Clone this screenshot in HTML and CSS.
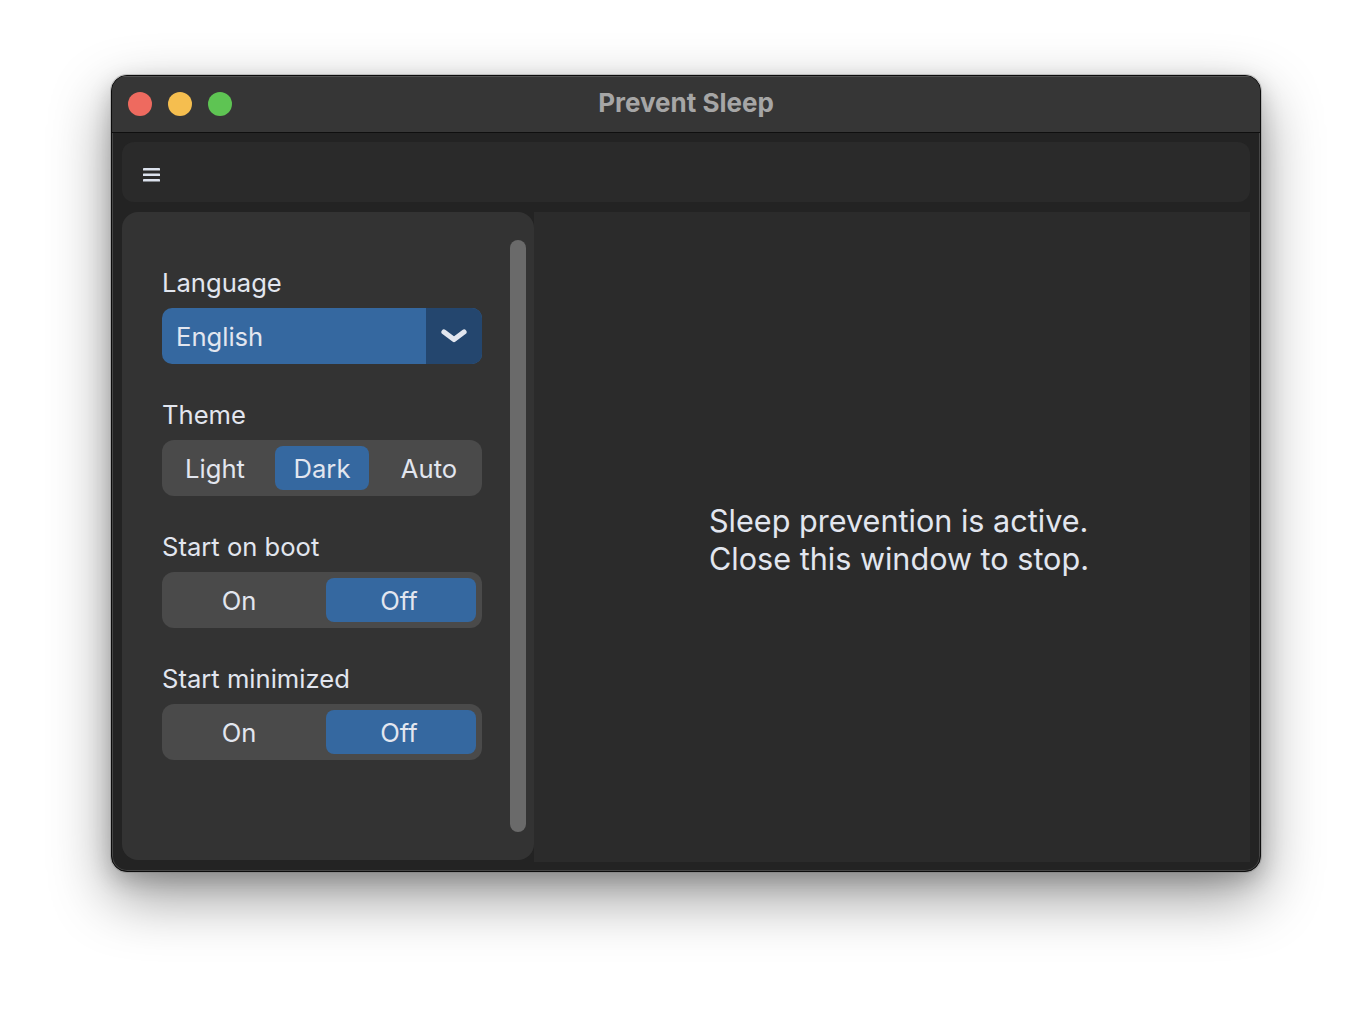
FILE: index.html
```html
<!DOCTYPE html>
<html lang="en">
<head>
<meta charset="utf-8">
<title>Prevent Sleep</title>
<link rel="stylesheet" href="styles.css">
</head>
<body>
<div class="window">
  <header class="titlebar">
    <div class="lights">
      <span class="light red"></span>
      <span class="light yellow"></span>
      <span class="light green"></span>
    </div>
    <div class="title">Prevent Sleep</div>
  </header>
  <div class="content">
    <div class="toolbar">
      <svg class="menu-icon" width="17" height="14" viewBox="0 0 17 14" aria-label="Menu">
        <rect x="0" y="0" width="17" height="2.6" rx="0.4" fill="#dbe1ec"/>
        <rect x="0" y="5.5" width="17" height="2.6" rx="0.4" fill="#dbe1ec"/>
        <rect x="0" y="11" width="17" height="2.6" rx="0.4" fill="#dbe1ec"/>
      </svg>
    </div>
    <div class="main">
      <aside class="sidebar">
        <div class="settings">
          <section class="setting">
            <div class="label">Language</div>
            <div class="select">
              <span class="select-value">English</span>
              <span class="select-arrow">
                <svg width="26" height="14" viewBox="0 0 26 14"><polyline points="3,3 13,10.5 23,3" fill="none" stroke="#e2e6ef" stroke-width="5.2" stroke-linecap="round" stroke-linejoin="round"/></svg>
              </span>
            </div>
          </section>
          <section class="setting">
            <div class="label">Theme</div>
            <div class="segmented three">
              <span class="seg">Light</span>
              <span class="seg active">Dark</span>
              <span class="seg">Auto</span>
            </div>
          </section>
          <section class="setting">
            <div class="label">Start on boot</div>
            <div class="segmented two">
              <span class="seg">On</span>
              <span class="seg active">Off</span>
            </div>
          </section>
          <section class="setting">
            <div class="label">Start minimized</div>
            <div class="segmented two">
              <span class="seg">On</span>
              <span class="seg active">Off</span>
            </div>
          </section>
        </div>
        <div class="scrollbar"><div class="thumb"></div></div>
      </aside>
      <main class="panel">
        <p class="status">Sleep prevention is active.<br>Close this window to stop.</p>
      </main>
    </div>
  </div>
</div>
</body>
</html>
```

FILE: styles.css
```css
* { box-sizing: border-box; }

html, body {
  margin: 0;
  background: #ffffff;
}

body {
  padding: 75px 0 0 111px;
  font-family: "Inter", "Noto Sans", sans-serif;
  color: #e2e6ef;
  height: 1020px;
  overflow: hidden;
}

.window {
  width: 1150px;
  height: 797px;
  border-radius: 16px;
  border: 1px solid #0c0c0c;
  background: #232323;
  overflow: hidden;
  display: flex;
  flex-direction: column;
  box-shadow: inset 0 0 0 1px rgba(255,255,255,0.16),
              0 0 0 1px rgba(120,120,120,0.35),
              0 24px 60px rgba(0,0,0,0.42),
              0 8px 22px rgba(0,0,0,0.18);
}

.titlebar {
  height: 57px;
  flex: none;
  background: #363636;
  border-bottom: 1px solid #0f0f0f;
  box-shadow: inset 0 1px 0 rgba(255,255,255,0.14);
  display: flex;
  align-items: center;
  position: relative;
}

.lights {
  display: flex;
  gap: 16px;
  padding-left: 16px;
}

.light {
  width: 24px;
  height: 24px;
  border-radius: 50%;
  display: block;
}
.red { background: #ee6a5f; }
.yellow { background: #f5be4f; }
.green { background: #5ec453; }

.title {
  position: absolute;
  left: 0;
  right: 0;
  top: 11px;
  text-align: center;
  font-weight: 700;
  font-size: 26px;
  line-height: 32px;
  color: #a6a6a6;
  pointer-events: none;
}

.content {
  flex: 1;
  display: flex;
  flex-direction: column;
  padding: 9px 10px 9px 10px;
  gap: 10px;
  min-height: 0;
}

.toolbar {
  height: 60px;
  flex: none;
  background: #2a2a2a;
  border-radius: 12px;
  padding: 26px 0 0 21px;
}

.menu-icon { display: block; }

.main {
  flex: 1;
  display: flex;
  min-height: 0;
}

.sidebar {
  width: 412px;
  flex: none;
  background: #333333;
  border-radius: 16px;
  display: flex;
  margin-bottom: 2px;
}

.settings {
  width: 360px;
  padding: 55px 0 0 40px;
  display: flex;
  flex-direction: column;
  gap: 35px;
}

.label {
  font-size: 25.6px;
  line-height: 32px;
  margin-bottom: 9px;
  color: #e2e6ef;
}

.select {
  width: 320px;
  height: 56px;
  border-radius: 10px;
  background: #3568a0;
  display: flex;
  overflow: hidden;
}

.select-value {
  flex: 1;
  font-size: 25.6px;
  line-height: 58px;
  padding-left: 14px;
}

.select-arrow {
  width: 56px;
  background: #24466e;
  display: flex;
  align-items: center;
  justify-content: center;
}

.select-arrow svg { display: block; margin-top: 0; }

.segmented {
  width: 320px;
  height: 56px;
  background: #4a4a4a;
  border-radius: 12px;
  padding: 6px;
  display: grid;
}

.segmented.three {
  grid-template-columns: 94px 94px 94px;
  column-gap: 13px;
}

.segmented.two {
  grid-template-columns: 142px 150px;
  column-gap: 16px;
}

.seg {
  font-size: 25.6px;
  line-height: 46px;
  text-align: center;
  border-radius: 8px;
  color: #e2e6ef;
  height: 44px;
}

.seg.active {
  background: #3568a0;
}

.segmented.two .seg.active { padding-right: 4px; }

.scrollbar {
  padding: 28px 0 28px 28px;
}

.thumb {
  width: 16px;
  height: 100%;
  border-radius: 8px;
  background: #6a6a6a;
}

.panel {
  flex: 1;
  background: #2b2b2b;
  display: flex;
  align-items: center;
  justify-content: center;
}

.status {
  margin: 6px 0 0 14px;
  font-size: 30.6px;
  line-height: 38px;
  color: #e2e6ef;
}
```
